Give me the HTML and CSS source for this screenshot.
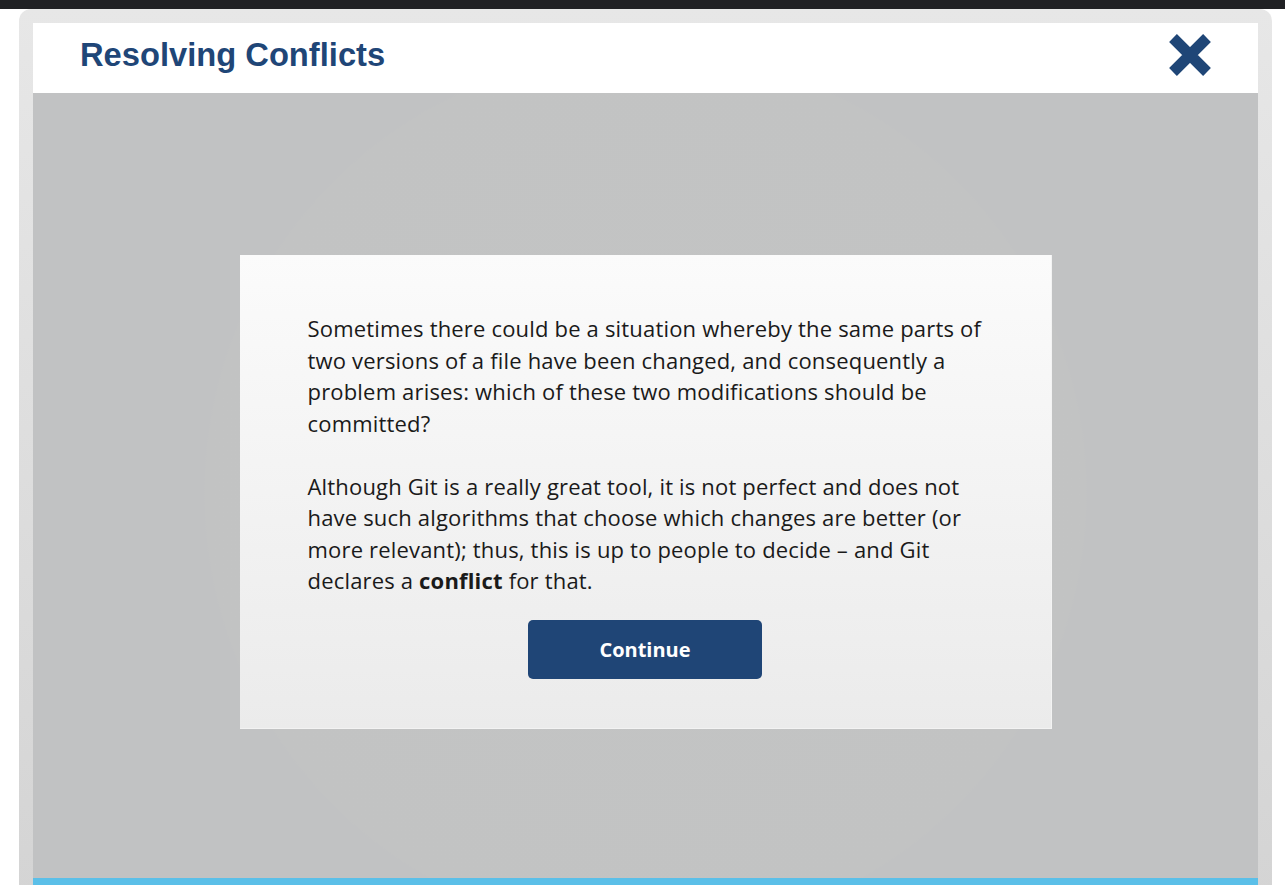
FILE: index.html
```html
<!DOCTYPE html>
<html lang="en">
<head>
<meta charset="utf-8">
<title>Resolving Conflicts</title>
<link rel="stylesheet" href="styles.css">
</head>
<body>
<div class="topbar"></div>
<div class="wrap">
  <div class="frame">
    <header class="header">
      <h1 class="title">Resolving Conflicts</h1>
      <button class="close" aria-label="Close">
        <svg width="46" height="46" viewBox="0 0 46 46">
          <path d="M6 6 L40 40 M40 6 L6 40" stroke="#1f4677" stroke-width="11" stroke-linecap="butt" stroke-linejoin="round" fill="none"/>
        </svg>
      </button>
    </header>
    <main class="stage">
      <div class="card">
        <p class="para">Sometimes there could be a situation whereby the same parts of<br>two versions of a file have been changed, and consequently a<br>problem arises: which of these two modifications should be<br>committed?</p>
        <p class="para">Although Git is a really great tool, it is not perfect and does not<br>have such algorithms that choose which changes are better (or<br>more relevant); thus, this is up to people to decide – and Git<br>declares a <b>conflict</b> for that.</p>
        <div class="actions"><button class="continue">Continue</button></div>
      </div>
    </main>
    <div class="progress"></div>
  </div>
</div>
</body>
</html>
```

FILE: styles.css
```css
html, body {
  margin: 0;
  padding: 0;
  height: 100%;
  overflow: hidden;
  background: #ffffff;
}
.topbar {
  height: 9px;
  background: #202124;
}
.wrap {
  padding: 0 13px 0 19px;
}
.frame {
  background: linear-gradient(#e7e7e7, #d4d4d4);
  border-radius: 12px 12px 0 0;
  padding: 14px 14px 0 14px;
  display: flex;
  flex-direction: column;
}
.header {
  height: 70px;
  box-sizing: border-box;
  background: #ffffff;
  display: flex;
  align-items: center;
  justify-content: space-between;
  padding: 0 45px 7px 47px;
}
.title {
  margin: 0;
  font-family: "Liberation Sans", Arial, sans-serif;
  font-weight: bold;
  font-size: 32.7px;
  color: #1f4677;
  letter-spacing: 0;
}
.close {
  border: 0;
  background: transparent;
  padding: 0;
  width: 46px;
  height: 46px;
  display: flex;
  align-items: center;
  justify-content: center;
  cursor: pointer;
}
.stage {
  height: 785px;
  background: radial-gradient(circle at 50% 51%, #c3c4c4 0, #c2c3c3 440px, #c1c2c3 442px, #c1c2c3 100%);
  display: flex;
  align-items: flex-start;
  justify-content: center;
  padding-top: 162px;
  box-sizing: border-box;
}
.card {
  width: 812px;
  box-sizing: border-box;
  background: linear-gradient(#fbfbfb, #ebebeb);
  border-right: 1px solid #f3f3f3;
  border-bottom: 1px solid #f3f3f3;
  padding: 58px 68px 49px 68px;
  font-family: "Open Sans", Lato, sans-serif;
  color: #1a1a1a;
}
.para {
  margin: 0 0 31.5px 0;
  font-size: 22px;
  letter-spacing: 0.18px;
  line-height: 31.5px;
  white-space: nowrap;
}
.para:last-of-type {
  margin-bottom: 0;
}
.para b {
  font-weight: bold;
}
.actions {
  display: flex;
  justify-content: center;
  margin-top: 23px;
}
.continue {
  width: 234px;
  height: 59px;
  border: 0;
  border-radius: 5px;
  background: #1f4576;
  color: #ffffff;
  font-family: "Open Sans", Lato, sans-serif;
  font-weight: bold;
  font-size: 20px;
  cursor: pointer;
}
.progress {
  height: 20px;
  background: #5bbfe8;
}
```
